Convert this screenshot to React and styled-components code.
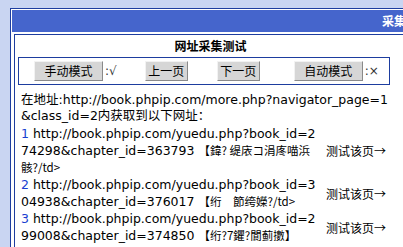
import React from 'react'
import styled, { createGlobalStyle } from 'styled-components'

const GlobalStyle = createGlobalStyle`
    html, body {
        margin: 0;
        padding: 0;
        background-color: #c9d5f2;
        overflow: hidden;
    }
    body {
        font-family: "DejaVu Sans", Verdana, "Noto Sans CJK SC", sans-serif;
        font-size: 12px;
        color: #000;
    }
`;

const Page = styled.div`
    padding: 8px 0 0 10px;
`;

const OuterBox = styled.div`
    width: 788px;
    border: 1px solid #1d3d9f;
    padding: 1px;
    background-color: white;
`;

const HeaderBar = styled.div`
    height: 22px;
    line-height: 22px;
    background-color: #4565cc;
    color: white;
    font-weight: bold;
    font-family: "Noto Sans CJK SC", sans-serif;
    font-size: 12px;
    text-align: center;
`;

const Body = styled.div`
    display: flex;
    padding: 2px 0 0 2px;
`;

const InnerBox = styled.div`
    width: 385px;
    height: 300px;
    border: 1px solid #1d3d9f;
    padding: 0 3px;
`;

const Title = styled.div`
    height: 22px;
    line-height: 22px;
    text-align: center;
    font-weight: bold;
    font-family: "Noto Sans CJK SC", sans-serif;
`;

const ButtonBar = styled.div`
    display: flex;
    align-items: center;
    box-sizing: border-box;
    width: 372px;
    height: 28px;
    padding-left: 15px;
    border: 1px solid #1d3d9f;
`;

const Button = styled.button`
    width: ${p => p.$w}px;
    height: 20px;
    margin-left: ${p => p.$ml || 0}px;
    padding: 0;
    background-color: #d6d6d6;
    border: 1px solid;
    border-color: #f2f2f2 #8a8a8a #8a8a8a #f2f2f2;
    font-family: "Noto Sans CJK SC", sans-serif;
    font-size: 12px;
    color: #000;
    line-height: 18px;
`;

const Mark = styled.span`
    margin-left: 2px;
    font-size: 12px;
    color: #333;
    font-family: "DejaVu Sans", sans-serif;
`;

const Content = styled.div`
    padding: 7px 0 0 3px;
    font-size: 12.5px;
    line-height: 16px;
`;

const Address = styled.div`
    width: 370px;
    word-break: break-all;
    margin-bottom: 1px;
`;

const Row = styled.div`
    display: flex;
    align-items: center;
    padding: 1px 0 0;
`;

const LinkText = styled.div`
    width: 300px;
    word-break: break-all;
`;

const Num = styled.span`
    color: #1a3fd0;
`;

const Garbled = styled.span`
    font-family: "Noto Sans CJK SC", sans-serif;
    font-size: 11.5px;
`;

const TestLink = styled.div`
    margin-left: 5px;
    font-family: "Noto Sans CJK SC", sans-serif;
    font-size: 12px;
    white-space: nowrap;
`;

const items = [
    { n: 1, url: 'http://book.phpip.com/yuedu.php?book_id=274298&chapter_id=363793', t: '【鍏? 缇庡コ涓庝喵浜骸?/td>' },
    { n: 2, url: 'http://book.phpip.com/yuedu.php?book_id=304938&chapter_id=376017', t: '【绗\u3000節绔嬫?/td>' },
    { n: 3, url: 'http://book.phpip.com/yuedu.php?book_id=299008&chapter_id=374850', t: '【绗?7鑺?閬蓟擻】' },
];

export default function App() {
    return (
        <Page>
            <GlobalStyle />
            <OuterBox>
                <HeaderBar>采集测试</HeaderBar>
                <Body>
                    <InnerBox>
                        <Title>网址采集测试</Title>
                        <ButtonBar>
                            <Button $w={69}>手动模式</Button>
                            <Mark>:√</Mark>
                            <Button $w={43} $ml={28}>上一页</Button>
                            <Button $w={43} $ml={29}>下一页</Button>
                            <Button $w={69} $ml={34}>自动模式</Button>
                            <Mark>:×</Mark>
                        </ButtonBar>
                        <Content>
                            <Address>在地址:http://book.phpip.com/more.php?navigator_page=1&amp;class_id=2内获取到以下网址：</Address>
                            {items.map(it => (
                                <Row key={it.n}>
                                    <LinkText>
                                        <Num>{it.n}</Num> {it.url} <Garbled>{it.t}</Garbled>
                                    </LinkText>
                                    <TestLink>测试该页→</TestLink>
                                </Row>
                            ))}
                        </Content>
                    </InnerBox>
                </Body>
            </OuterBox>
        </Page>
    )
}
